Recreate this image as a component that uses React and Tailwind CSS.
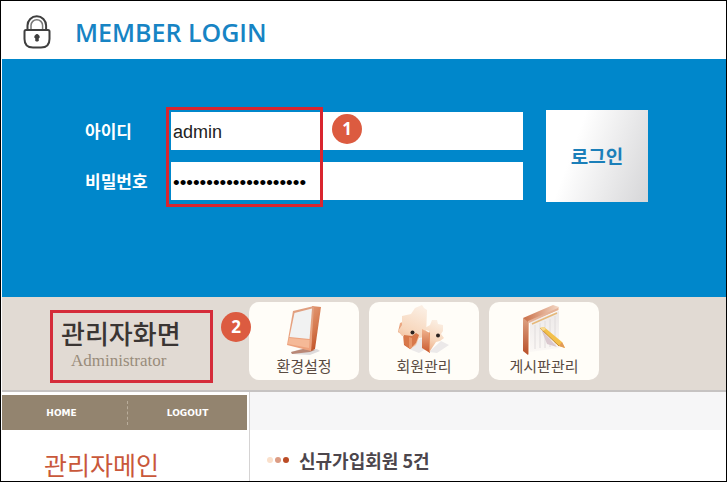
import React from "react";

const kr = "font-['Noto_Sans_CJK_KR',sans-serif]";

function LockIcon() {
  return (
    <svg width="28" height="34" viewBox="0 0 28 34" fill="none" stroke="#3f3f3f" aria-hidden="true">
      <path d="M4.500 15V10.500a9.300 9.300 0 0 1 18.600 0V15" strokeWidth="2" />
      <path d="M8 15v-4.500a5.800 5.800 0 0 1 11.600 0V15" strokeWidth="1.500" stroke="#777" />
      <path d="M3 15h22q1.500 0 1.500 1.500V24q0 8.500-8.500 8.500h-8q-8.500 0-8.500-8.500v-7.500Q1.500 15 3 15Z" strokeWidth="2" fill="#fff" />
      <path d="M14 19.500a2.300 2.300 0 0 1 1.200 4.200V26h-2.400v-2.300A2.300 2.300 0 0 1 14 19.500Z" fill="#3f3f3f" stroke="#3f3f3f" strokeWidth="1" />
    </svg>
  );
}

function MonitorIcon() {
  return (
    <svg width="50" height="52" viewBox="0 0 50 52" aria-hidden="true">
      <defs>
        <linearGradient id="mon-side" x1="0" y1="0" x2="0.3" y2="1">
          <stop offset="0" stopColor="#e39a74" />
          <stop offset="0.6" stopColor="#d4764c" />
          <stop offset="1" stopColor="#c05228" />
        </linearGradient>
        <linearGradient id="mon-front" x1="0" y1="0" x2="0" y2="1">
          <stop offset="0" stopColor="#dfa081" />
          <stop offset="1" stopColor="#efa27c" />
        </linearGradient>
      </defs>
      <path d="M12 48l10-3h16l3 2-10 4-18-1Z" fill="#dedbdc" />
      <path d="M12 48l12-3 12 1-5 2-18 2Z" fill="#b98775" />
      <path d="M33 2l9 1-6 42-4 2Z" fill="url(#mon-side)" />
      <path d="M14 7L35 2l-3 45-24-6Z" fill="url(#mon-front)" />
      <path d="M15.500 9L33 4.500 30.500 35 10.500 33Z" fill="#f1f2f2" />
      <path d="M10 34l20.500 2-.5 8-21-4Z" fill="#f5b997" />
    </svg>
  );
}

function PuzzleIcon() {
  return (
    <svg width="54" height="52" viewBox="0 0 54 52" aria-hidden="true">
      <defs>
        <linearGradient id="puz-light" x1="0.6" y1="0" x2="0.3" y2="1">
          <stop offset="0" stopColor="#fbeee2" />
          <stop offset="0.6" stopColor="#f7d6bb" />
          <stop offset="1" stopColor="#eeb08a" />
        </linearGradient>
        <linearGradient id="puz-dark" x1="0" y1="0" x2="0" y2="1">
          <stop offset="0" stopColor="#f0b48f" />
          <stop offset="1" stopColor="#c9582c" />
        </linearGradient>
      </defs>
      <path d="M12 45l12-11 8 9-10 6Z" fill="#ece9e9" />
      <path d="M32 48l12-11 8 4-12 8Z" fill="#ece9e9" />
      <path d="M3 19l5-2 4 14 1 14-6-4-1-10-5-3Z" fill="url(#puz-dark)" />
      <path d="M5 12l9-2 4-6 7-3 2 3 3 2-1 27-7 1-3 7-6 4-1-12-7-1-4-5 4-6Z" fill="url(#puz-light)" />
      <path d="M7 31l8 1 4-3 3 2-3 8-6 6-6-5Z" fill="#d8784a" />
      <path d="M12 33l3 1 0 10-3 1Z" fill="#e79669" />
      <circle cx="15.500" cy="28.500" r="2" fill="#29211e" />
      <path d="M25 25l8 4v20l-8-5Z" fill="url(#puz-dark)" />
      <path d="M26 25l7-4 2-5 5 0 1 4 5 1 0 6-2 3 3 4-4 3-4 1-6 9-1-20Z" fill="url(#puz-light)" />
      <path d="M32 29l1-1v20l-1 1Z" fill="#e59467" />
      <circle cx="41" cy="31.500" r="2" fill="#29211e" />
    </svg>
  );
}

function BoardIcon() {
  return (
    <svg width="50" height="52" viewBox="0 0 50 52" aria-hidden="true">
      <defs>
        <linearGradient id="brd-side" x1="0" y1="0" x2="0" y2="1">
          <stop offset="0" stopColor="#dda283" />
          <stop offset="1" stopColor="#b84e27" />
        </linearGradient>
        <linearGradient id="brd-top" x1="0" y1="0" x2="1" y2="0">
          <stop offset="0" stopColor="#c96e46" />
          <stop offset="1" stopColor="#f4d9c6" />
        </linearGradient>
        <linearGradient id="brd-page" x1="0" y1="0" x2="0" y2="1">
          <stop offset="0" stopColor="#ece8e8" />
          <stop offset="1" stopColor="#fbf8f5" />
        </linearGradient>
      </defs>
      <path d="M11 18l29-11v37l-29 4Z" fill="url(#brd-page)" />
      <path d="M16 21v24M21 19v25M26 17v27M31 15v28M36 12v30" stroke="#e0dcdc" strokeWidth="1" />
      <path d="M4 14l5 3v34l-5-4Z" fill="url(#brd-side)" />
      <path d="M4 14L34 1l6 2v3L9 18Z" fill="url(#brd-top)" />
      <path d="M9 17L39 4v2L10 19v31l-1 1Z" fill="#e5b297" />
      <path d="M13 20L38 9" stroke="#e6b878" strokeWidth="1.500" />
      <path d="M22 25l16 18-10-3Z" fill="#dac8ce" />
      <path d="M21 24l4-1 18 15 3 6-6-2Z" fill="#f3c04a" />
      <path d="M21 24l19 18" stroke="#c88c2f" strokeWidth="1" />
      <path d="M43 38l3 6-6-2Z" fill="#e29a58" />
      <path d="M21 24l4-1 2 2-3 2Z" fill="#f8da91" />
    </svg>
  );
}

function Badge({ children, className }) {
  return (
    <span
      className={`absolute flex size-[30px] items-center justify-center rounded-full bg-[#dc5b40] font-['Open_Sans',sans-serif] text-[17px] font-bold text-white ${className}`}
    >
      {children}
    </span>
  );
}

const menu = [
  { label: "환경설정", Icon: MonitorIcon },
  { label: "회원관리", Icon: PuzzleIcon },
  { label: "게시판관리", Icon: BoardIcon },
];

export default function App() {
  return (
    <div className={`flex min-h-screen flex-col overflow-hidden border border-black bg-white pl-px ${kr}`}>
      <header className="flex h-[58px] items-center gap-6 px-[21px] pb-1 pt-2">
        <LockIcon />
        <h1 className="font-['Open_Sans',sans-serif] text-[25px] font-semibold leading-8 text-[#1784c4]">MEMBER LOGIN</h1>
      </header>

      <main className="flex flex-1 flex-col">
        <form className="flex h-[238px] items-start gap-[23px] bg-[#0087cb] pl-[83px] pr-[78px] pt-[51px]" onSubmit={(e) => e.preventDefault()}>
          <div className="relative flex flex-1 flex-col gap-3 pt-0.5">
            <div className="flex items-center">
              <label htmlFor="userid" className="w-[86px] text-[17px] font-bold leading-6 text-white">아이디</label>
              <input id="userid" type="text" defaultValue="admin" className="h-[38px] min-w-0 flex-1 bg-white px-0.5 pt-0.5 font-['Liberation_Sans',sans-serif] text-[18px] text-[#222] outline-none" />
            </div>
            <div className="flex items-center">
              <label htmlFor="userpw" className="w-[86px] text-[17px] font-bold leading-6 text-white">비밀번호</label>
              <input id="userpw" type="password" defaultValue="administrator1234567" className="h-[38px] min-w-0 flex-1 bg-white px-0.5 pt-1 font-['Liberation_Sans',sans-serif] text-[19px] text-black outline-none" />
            </div>
            <div className="pointer-events-none absolute -top-[3px] left-[81px] h-[100px] w-[157px] border-[3px] border-[#d9252f]" />
            <Badge className="left-[247px] top-1">1</Badge>
          </div>
          <button type="submit" className="h-[92px] w-[102px] bg-linear-110 from-white from-30% to-[#d6d6d8] text-[19px] font-bold text-[#1b7fb9]">로그인</button>
        </form>

        <section className="flex h-[95px] items-start border-b-2 border-[#c6c3c2] bg-[#e1dad3] pl-12">
          <div className="relative mr-9 mt-[13px] h-[73px] w-[163px] shrink-0 border-[3px] border-[#d52c3a] pl-2 pt-1">
            <h2 className="text-[26px] font-medium leading-8 text-[#3a3533]">관리자화면</h2>
            <p className="pl-2.5 font-['Liberation_Serif',serif] text-[17px] leading-6 text-[#998c7b]">Administrator</p>
            <Badge className="-right-[41px] -top-px">2</Badge>
          </div>
          <nav className="flex gap-2.5 pt-[5px]">
            {menu.map(({ label, Icon }) => (
              <a key={label} href="#" className="flex h-[78px] w-[110px] flex-col items-center rounded-[10px] bg-[#fffdf8] pt-0.5 text-[15px] leading-5 text-[#5a4b42]">
                <Icon />
                {label}
              </a>
            ))}
          </nav>
        </section>

        <div className="flex flex-1">
          <aside className="w-[248px] shrink-0 border-r border-[#d5d3d3] pr-0.5 pt-[3px]">
            <nav className="flex h-[35px] items-center bg-[#93846f] font-['DejaVu_Sans',sans-serif] text-[9px] font-bold text-white">
              <a href="#" className="flex h-6 flex-1 items-center justify-center border-r border-dashed border-[#b9ad9b] pr-1.5 pt-0.5">HOME</a>
              <a href="#" className="flex h-6 flex-1 items-center justify-center pt-0.5">LOGOUT</a>
            </nav>
            <h2 className="pl-[42px] pt-[18px] text-[25px] leading-8 text-[#c9583a]">관리자메인</h2>
          </aside>
          <section className="flex-1">
            <div className="h-[38px] bg-[#f6f6f7]" />
            <div className="flex items-center gap-2.5 pl-[17px] pt-[18px]">
              <span className="flex gap-0.5">
                <i className="size-1.5 rounded-full bg-[#fae0cb]" />
                <i className="size-1.5 rounded-full bg-[#dc9c83]" />
                <i className="size-1.5 rounded-full bg-[#bb4c25]" />
              </span>
              <h3 className="text-[18px] font-bold leading-6 text-[#4c464c]">신규가입회원 5건</h3>
            </div>
          </section>
        </div>
      </main>
    </div>
  );
}
